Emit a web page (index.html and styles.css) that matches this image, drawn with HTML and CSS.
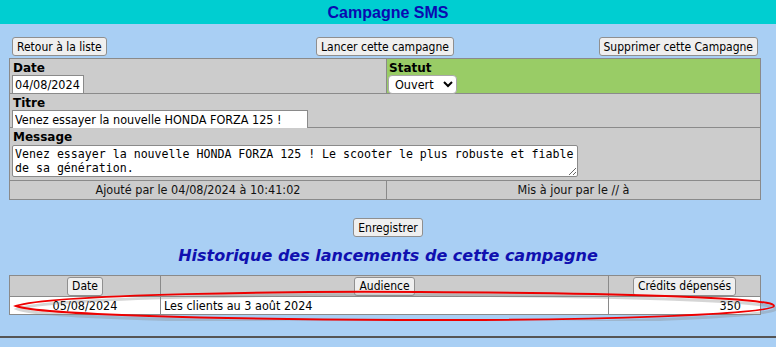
FILE: index.html
```html
<!DOCTYPE html>
<html lang="fr">
<head>
  <meta charset="UTF-8">
  <title>Campagne SMS</title>
  <link rel="stylesheet" href="styles.css">
</head>
<body>
  <!-- Bandeau titre -->
  <div class="topbar">Campagne SMS</div>

  <div class="actions">
    <div class="left"><button class="btn">Retour à la liste</button></div>
    <div class="center"><button class="btn">Lancer cette campagne</button></div>
    <div class="right"><button class="btn">Supprimer cette Campagne</button></div>
  </div>

  <!-- Fiche campagne -->
  <div class="fiche">
    <div class="cell">
      <label class="lbl" for="date">Date</label>
      <input type="text" id="date" class="fld date" value="04/08/2024">
    </div>
    <div class="cell statut">
      <label class="lbl" for="statut">Statut</label>
      <select id="statut" class="fld sel">
        <option>Ouvert</option>
        <option>Fermé</option>
      </select>
    </div>
    <div class="cell wide">
      <label class="lbl" for="titre">Titre</label>
      <input type="text" id="titre" class="fld titre" value="Venez essayer la nouvelle HONDA FORZA 125 !">
    </div>
    <div class="cell wide">
      <label class="lbl" for="message">Message</label>
      <textarea id="message" class="msg">Venez essayer la nouvelle HONDA FORZA 125 ! Le scooter le plus robuste et fiable de sa génération.</textarea>
    </div>
    <div class="cell info">Ajouté par  le 04/08/2024 à 10:41:02</div>
    <div class="cell info">Mis à jour par  le // à</div>
  </div>

  <div class="save"><button class="btn">Enregistrer</button></div>

  <!-- Historique -->
  <h2 class="histo-title">Historique des lancements de cette campagne</h2>

  <div class="histo">
    <table class="launches">
      <thead>
        <tr>
          <th class="c-date"><button class="btn">Date</button></th>
          <th class="c-aud"><button class="btn">Audience</button></th>
          <th class="c-cred"><button class="btn">Crédits dépensés</button></th>
        </tr>
      </thead>
      <tbody>
        <tr>
          <td class="c-date">05/08/2024</td>
          <td class="c-aud">Les clients au 3 août 2024</td>
          <td class="c-cred">350</td>
        </tr>
      </tbody>
    </table>
    <!-- annotation rouge autour de la ligne -->
    <svg class="circle" width="776" height="40" viewBox="0 0 776 40">
      <path d="M16 25 C 50 13, 300 10, 420 11 C 600 12, 775 16, 774 25 C 773 33, 600 40, 400 39 C 220 38, 40 34, 16 25 Z" fill="none" stroke="#888" stroke-width="3" opacity="0.35" transform="translate(2 3)"/>
      <path d="M16 25 C 50 13, 300 10, 420 11 C 600 12, 775 16, 774 25 C 773 33, 600 40, 400 39 C 220 38, 40 34, 16 25 Z" fill="none" stroke="#ee0000" stroke-width="2"/>
    </svg>
  </div>

  <div class="foot"></div>
</body>
</html>
```

FILE: styles.css
```css
body {
  margin: 0;
  padding: 0;
  background-color: #A9CFF4;
  font-family: "DejaVu Sans Condensed", "DejaVu Sans", sans-serif;
  font-size: 12px;
  color: #000;
}
.topbar {
  height: 24px;
  line-height: 26px;
  background-color: #00CED1;
  color: #0a0ab0;
  font-family: "Liberation Sans", Arial, sans-serif;
  font-weight: bold;
  font-size: 16px;
  text-align: center;
}
.btn {
  font-family: inherit;
  font-size: 12px;
  color: #000;
  background-color: #EFEFEF;
  border: 1px solid #8f8f8f;
  border-radius: 3px;
  padding: 0 4px;
  height: 19px;
  line-height: 16px;
  margin: 0;
}
.actions {
  display: grid;
  grid-template-columns: 1fr auto 1fr;
  margin: 13px 18px 2px 12px;
}
.actions .center { text-align: center; }
.actions .right { text-align: right; }

/* fiche */
.fiche {
  display: grid;
  grid-template-columns: 376px 1fr;
  grid-template-rows: 34px 33px 52px 18px;
  gap: 1px;
  background-color: #8a8a8a;
  border: 1px solid #8a8a8a;
  margin: 0 15px 0 9px;
}
.cell {
  background-color: #CCCCCC;
  padding: 2px 2px 0 2px;
}
.cell.wide { grid-column: 1 / 3; }
.cell.statut { background-color: #99CC66; padding-left: 1px; }
.lbl {
  display: block;
  font-weight: bold;
  font-family: "DejaVu Sans", sans-serif;
  font-size: 12px;
  height: 14px;
  line-height: 14px;
  margin-left: 1px;
}
.fld {
  font-family: inherit;
  font-size: 12.5px;
  border: 1px solid #8a8a8a;
  background: #fff;
  height: 19px;
  padding: 0 2px;
  margin: 0;
  box-sizing: border-box;
}
.date { width: 72px; }
.titre { width: 296px; }
.sel {
  width: 69px;
  border: 1px solid #a8a8a8;
  border-radius: 4px;
  background-color: #fff;
}
.msg {
  display: block;
  width: 566px;
  height: 32px;
  margin: 1px 0 0 0;
  padding: 1px 2px;
  box-sizing: border-box;
  border: 1px solid #8a8a8a;
  border-radius: 2px;
  font-family: "DejaVu Sans Mono", monospace;
  font-size: 11.6px;
  line-height: 14px;
  resize: both;
}
.cell.info {
  padding: 0;
  text-align: center;
  line-height: 18px;
  font-size: 12.5px;
  color: #111;
}
.save {
  text-align: center;
  margin-top: 18px;
}
.histo-title {
  margin: 8px 0 0 0;
  text-align: center;
  color: #1010B0;
  font-family: "DejaVu Sans", sans-serif;
  font-style: italic;
  font-size: 16px;
  line-height: 22px;
}

/* historique */
.histo {
  position: relative;
  margin: 8px 15px 0 9px;
}
.launches {
  width: 100%;
  table-layout: fixed;
  border-collapse: collapse;
  border: 1px solid #8a8a8a;
}
.launches th {
  background-color: #CCCCCC;
  height: 20px;
  padding: 0;
  border: 1px solid #8a8a8a;
  font-weight: normal;
}
.launches td {
  background-color: #fff;
  height: 17px;
  padding: 0 3px;
  border: 1px solid #8a8a8a;
  font-size: 12.5px;
}
.launches .c-date { width: 150px; text-align: center; }
.launches td.c-aud { text-align: left; }
.launches .c-cred { width: 151px; }
.launches td.c-cred { text-align: right; padding-right: 19px; }
.circle {
  position: absolute;
  left: -9px;
  top: 6px;
  pointer-events: none;
}
.foot {
  margin-top: 21px;
  border-top: 2px solid #555;
}
```
